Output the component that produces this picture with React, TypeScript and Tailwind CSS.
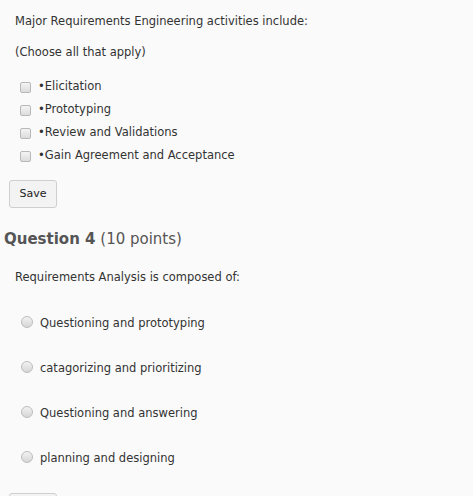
const checks = ["Elicitation", "Prototyping", "Review and Validations", "Gain Agreement and Acceptance"];

const radios = [
  "Questioning and prototyping",
  "catagorizing and prioritizing",
  "Questioning and answering",
  "planning and designing",
];

export default function App() {
  return (
    <div
      className="h-[496px] bg-[#fafafa] text-[#333] text-[11.5px] overflow-hidden"
      style={{ fontFamily: '"Comic Sans MS", "DejaVu Sans", sans-serif' }}
    >
      <div className="px-[15px] pt-[13px]">
        <p className="leading-[16px]">Major Requirements Engineering activities include:</p>
        <p className="mt-[15px] leading-[16px]">(Choose all that apply)</p>
      </div>

      {/* checkbox answers */}
      <div className="mt-[19px] pl-[20px] flex flex-col gap-[7px]">
        {checks.map((c) => (
          <label key={c} className="flex items-center h-[16px]">
            <span className="w-[11px] h-[11px] rounded-[2px] border border-[#b8b8b8] bg-gradient-to-b from-[#f4f4f4] to-[#dcdcdc]" />
            <span className="ml-[7px]">•{c}</span>
          </label>
        ))}
      </div>

      <div className="pl-[9px] mt-[16px]">
        <button className="w-[48px] h-[28px] rounded-[3px] border border-[#cfcfcf] bg-[#f3f3f3] text-[11px] text-[#222]">
          Save
        </button>
      </div>

      <h2 className="mt-[21px] pl-[4px] text-[15px] text-[#555] leading-[20px]">
        <span className="font-bold">Question 4</span> <span>(10 points)</span>
      </h2>

      <p className="mt-[20px] pl-[15px] leading-[16px]">Requirements Analysis is composed of:</p>

      <div className="mt-[31px] pl-[21px] flex flex-col gap-[29px]">
        {radios.map((r) => (
          <label key={r} className="flex items-center h-[16px]">
            <span className="w-[12px] h-[12px] rounded-full border border-[#bdbdbd] bg-gradient-to-b from-[#f2f2f2] to-[#d6d6d6] -mt-[4px]" />
            <span className="ml-[7px]">{r}</span>
          </label>
        ))}
      </div>

      {/* second save button, only its top edge is in view */}
      <div className="pl-[9px] mt-[26px]">
        <button className="w-[48px] h-[28px] rounded-[3px] border border-[#cfcfcf] bg-[#f3f3f3] text-[11px] text-[#222]">
          <span className="invisible">Save</span>
        </button>
      </div>
    </div>
  );
}
